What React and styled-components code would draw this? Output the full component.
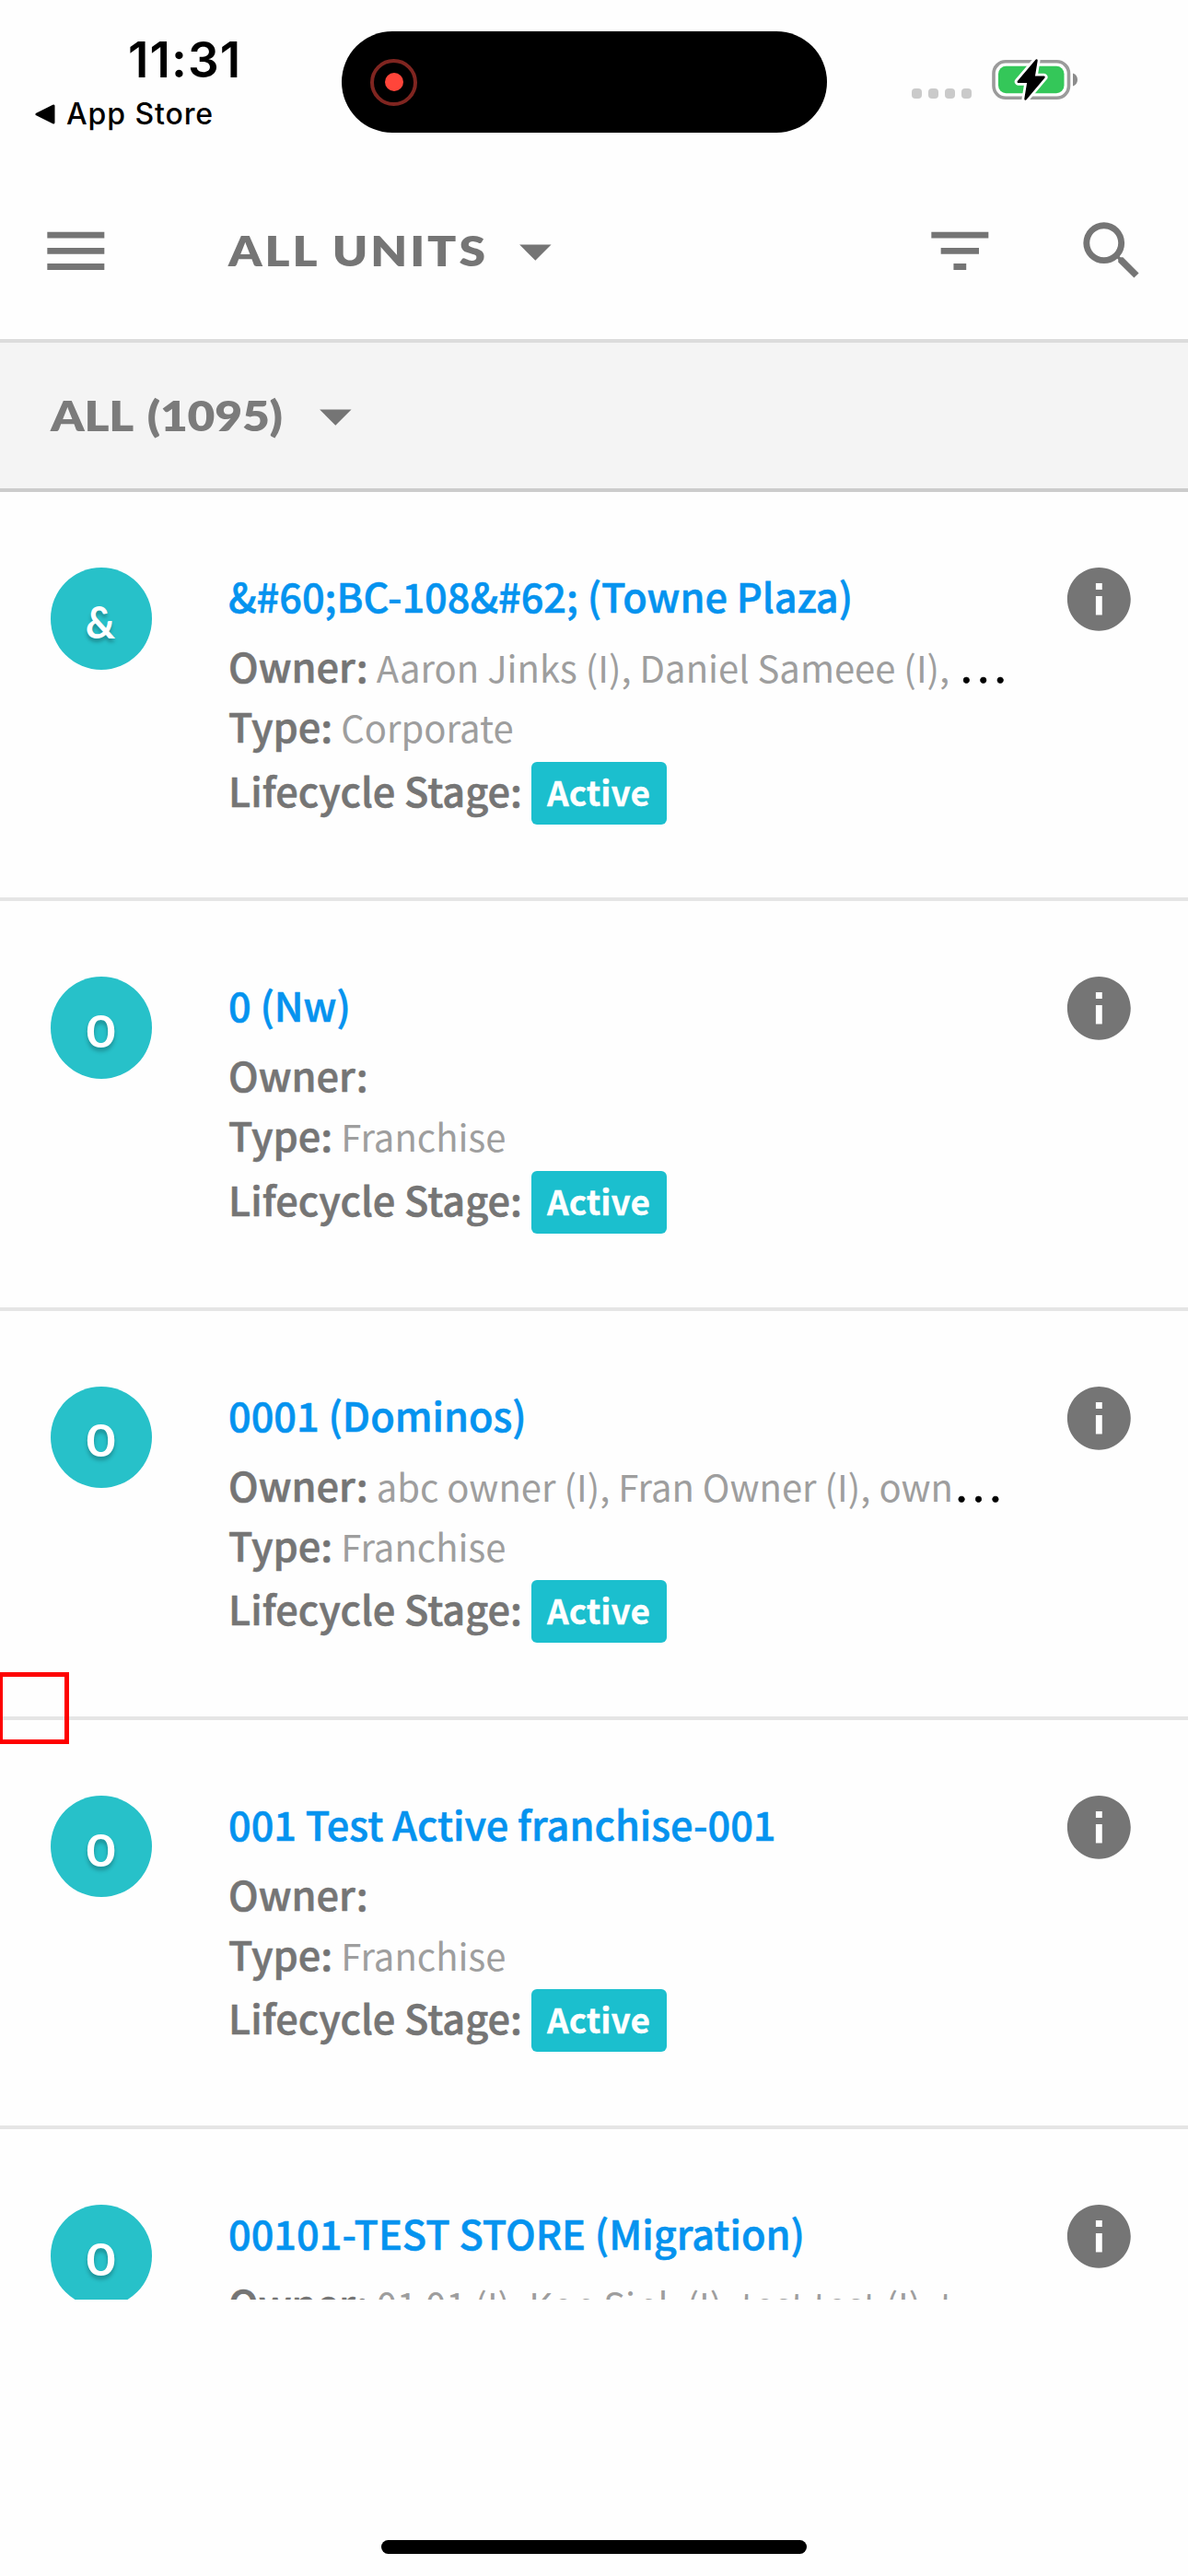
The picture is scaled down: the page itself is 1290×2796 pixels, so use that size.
import React from "react";
import styled, { createGlobalStyle } from "styled-components";

const GlobalStyle = createGlobalStyle`
  body { margin: 0; background: #fefefe; }
  * { box-sizing: border-box; }
`;

const sourceSans = `"Noto Sans CJK SC", "Noto Sans", sans-serif`;
const system = `Inter, "Liberation Sans", sans-serif`;
const heading = `Lato, "Open Sans", sans-serif`;

const Screen = styled.div`
  position: relative;
  display: flex;
  flex-direction: column;
  width: 1290px;
  height: 2796px;
  overflow: hidden;
  background: #fefefe;
  font-family: ${sourceSans};
`;

const StatusBar = styled.header`
  display: flex;
  align-items: flex-start;
  height: 176px;
  color: #000;
  font-family: ${system};
`;

const StatusLeft = styled.div`
  width: 371px;
  padding-top: 35px;
`;

const Clock = styled.div`
  padding-left: 139px;
  font-size: 53px;
  font-weight: 600;
  line-height: 60px;
  letter-spacing: 1.1px;
`;

const BackLink = styled.div`
  display: flex;
  align-items: center;
  gap: 12px;
  margin-top: 9px;
  padding-left: 38px;
  font-size: 32px;
  font-weight: 500;
  line-height: 40px;
  letter-spacing: 0.9px;
`;

const Island = styled.div`
  display: flex;
  align-items: center;
  width: 527px;
  height: 110px;
  margin-top: 34px;
  padding-left: 31px;
  border-radius: 55px;
  background: #000;
`;

const RecordRing = styled.div`
  display: flex;
  align-items: center;
  justify-content: center;
  width: 51px;
  height: 51px;
  border: 4px solid #7f2520;
  border-radius: 50%;
`;

const RecordDot = styled.div`
  width: 20px;
  height: 20px;
  border-radius: 50%;
  background: #ff453a;
`;

const SignalDots = styled.div`
  display: flex;
  gap: 7px;
  margin: 96px 0 0 92px;
`;

const SignalDot = styled.span`
  width: 11px;
  height: 11px;
  border-radius: 4px;
  background: #cacaca;
`;

const BatteryIcon = styled.svg`
  margin: 60px 0 0 21px;
`;

const Toolbar = styled.nav`
  display: flex;
  align-items: center;
  height: 196px;
  padding: 0 41px;
  border-bottom: 4px solid #dcdcdc;
  color: #757575;
`;

const Icon = styled.svg`
  flex: none;
  width: 82.67px;
  height: 82.67px;
  fill: #757575;
`;

const Title = styled.h1`
  width: ${(p) => p.$width}px;
  margin: 0;
  font-family: ${heading};
  font-size: 46px;
  font-weight: 800;
  line-height: 60px;
  white-space: nowrap;
  letter-spacing: ${(p) => p.$tracking}px;
  word-spacing: ${(p) => p.$wordGap || 0}px;
  color: ${(p) => p.$color};

  span {
    display: inline-block;
    transform: scaleX(1.12);
    transform-origin: left;
  }
`;

const PickerButton = styled.div`
  display: flex;
  align-items: center;
  margin-left: ${(p) => p.$offset}px;
`;

const Actions = styled.div`
  display: flex;
  gap: 83px;
  margin-left: auto;
`;

const FilterBar = styled.div`
  display: flex;
  align-items: center;
  height: 162px;
  padding-left: 55px;
  border-bottom: 4px solid #cccccc;
  background: #f4f4f4;
`;

const UnitList = styled.main`
  height: 1962px;
  overflow: hidden;
`;

const UnitRow = styled.article`
  display: grid;
  grid-template-columns: 110px 1fr 82.67px;
  column-gap: 83px;
  height: 444.3px;
  padding: 82px 55px 0 55px;
  border-bottom: 4px solid #e5e5e5;
`;

const Avatar = styled.div`
  display: flex;
  align-items: center;
  justify-content: center;
  width: 110px;
  height: 110.5px;
  padding: 7px 1px 0 0;
  border-radius: 50%;
  background: #27c1c9;
  color: #fff;
  font-family: ${heading};
  font-size: 47px;
  font-weight: 700;
  text-shadow: 0 4px 4px rgba(0, 0, 0, 0.25);

  span {
    transform: scaleX(${(p) => p.$stretch});
  }
`;

const Details = styled.div`
  min-width: 0;
  white-space: nowrap;
  color: #757575;
  font-size: 43.3px;
  font-weight: 500;
  -webkit-text-stroke: 0.6px currentColor;
`;

const UnitName = styled.h2`
  margin: 0 0 13px;
  color: #0593ef;
  font-size: 43.3px;
  font-weight: 500;
  line-height: 60px;
`;

const Field = styled.div`
  display: flex;
  align-items: baseline;
  height: ${(p) => p.$height || 66}px;
  line-height: ${(p) => p.$height || 66}px;
`;

const Value = styled.span`
  margin-left: 9px;
  color: #9e9e9e;
  font-size: 40px;
  font-weight: 400;
  white-space: pre;
  -webkit-text-stroke: 0;
`;

const More = styled.span`
  color: #000;
  font-family: "Liberation Serif", serif;
  font-size: 55px;
  font-weight: 400;
  line-height: 0;
`;

const StageField = styled.div`
  display: flex;
  align-items: center;
  gap: 10px;
  height: 72px;
  line-height: 72px;
`;

const Badge = styled.span`
  height: 68px;
  margin-top: 8px;
  padding: 0 18px 0 17px;
  border-radius: 6px;
  background: #1bbfce;
  color: #fff;
  font-size: 37px;
  font-weight: 700;
  line-height: 65px;
  -webkit-text-stroke: 0.3px currentColor;
`;

const InfoIcon = styled(Icon)`
  margin-top: -7px;
`;

const FocusBox = styled.div`
  position: absolute;
  top: 1815px;
  left: -2px;
  width: 77px;
  height: 78px;
  border: 5px solid #fe0000;
`;

const HomeIndicator = styled.div`
  width: 462px;
  height: 15px;
  margin: 261px auto 0;
  border-radius: 8px;
  background: #000;
`;

const units = [
  { name: "&#60;BC-108&#62; (Towne Plaza)", owner: "Aaron Jinks (I), Daniel Sameee (I), ", type: "Corporate" },
  { name: "0 (Nw)", owner: "", type: "Franchise" },
  { name: "0001 (Dominos)", owner: "abc owner (I), Fran Owner (I), own", type: "Franchise" },
  { name: "001 Test Active franchise-001", owner: "", type: "Franchise" },
  { name: "00101-TEST STORE (Migration)", owner: "01 01 (I), Ken Sink (I), test test (I), t", type: "Franchise" },
];

const Caret = () => (
  <Icon viewBox="0 0 24 24">
    <path d="M7 10l5 5 5-5z" />
  </Icon>
);

const Battery = () => (
  <BatteryIcon width="96" height="53" viewBox="1076 60 96 53">
    <rect x="1079" y="66.8" width="81.5" height="39.5" rx="13" fill="#fff" stroke="#9b9b9b" strokeWidth="3.6" />
    <rect x="1084" y="71.8" width="71.5" height="29.4" rx="8.5" fill="#34c759" />
    <path d="M1165 79.5c3 1 5 3.6 5 7s-2 6-5 7z" fill="#8c8c8c" />
    <path
      d="M1125.5 65.500L1105.8 88.7h10.8L1113.5 107.5L1133.500 83.700h-11z"
      fill="#fff"
      stroke="#fff"
      strokeWidth="8"
      strokeLinejoin="round"
    />
    <path
      d="M1125.5 65.500L1105.8 88.7h10.8L1113.5 107.5L1133.500 83.700h-11z"
      fill="#000"
      stroke="#000"
      strokeWidth="2.5"
      strokeLinejoin="round"
    />
  </BatteryIcon>
);

function Unit({ unit }) {
  const initial = unit.name[0];
  return (
    <UnitRow>
      <Avatar $stretch={initial === "0" ? 1.18 : 0.95}>
        <span>{initial}</span>
      </Avatar>
      <Details>
        <UnitName>{unit.name}</UnitName>
        <Field>
          Owner:
          {unit.owner && (
            <>
              <Value>{unit.owner}</Value>
              <More>…</More>
            </>
          )}
        </Field>
        <Field $height={65.5}>
          Type:<Value>{unit.type}</Value>
        </Field>
        <StageField>
          Lifecycle Stage:<Badge>Active</Badge>
        </StageField>
      </Details>
      <InfoIcon viewBox="0 0 24 24">
        <path d="M12 2C6.48 2 2 6.48 2 12s4.48 10 10 10 10-4.48 10-10S17.52 2 12 2zm1 15h-2v-6h2v6zm0-8h-2V7h2v2z" />
      </InfoIcon>
    </UnitRow>
  );
}

export default function App() {
  return (
    <Screen>
      <GlobalStyle />
      <StatusBar>
        <StatusLeft>
          <Clock>11:31</Clock>
          <BackLink>
            <svg width="22" height="22" viewBox="0 0 22 22">
              <path d="M2 11L20 2V20z" stroke="#000" strokeWidth="3" strokeLinejoin="round" />
            </svg>
            App Store
          </BackLink>
        </StatusLeft>
        <Island>
          <RecordRing>
            <RecordDot />
          </RecordRing>
        </Island>
        <SignalDots>
          {[0, 1, 2, 3].map((i) => (
            <SignalDot key={i} />
          ))}
        </SignalDots>
        <Battery />
      </StatusBar>

      <Toolbar>
        <Icon viewBox="0 0 24 24">
          <path d="M3 18h18v-2H3v2zm0-5h18v-2H3v2zm0-7v2h18V6H3z" />
        </Icon>
        <PickerButton $offset={124}>
          <Title $width={292} $tracking={2.6} $color="#757575">
            <span>ALL UNITS</span>
          </Title>
          <Caret />
        </PickerButton>
        <Actions>
          <Icon viewBox="0 0 24 24">
            <path d="M10 18h4v-2h-4v2zM3 6v2h18V6H3zm3 7h12v-2H6v2z" />
          </Icon>
          <Icon viewBox="0 0 24 24">
            <path d="M15.5 14h-.79l-.28-.27A6.471 6.471 0 0 0 16 9.5 6.5 6.5 0 1 0 9.5 16c1.61 0 3.09-.59 4.23-1.57l.27.28v.79l5 4.99L20.49 19l-4.99-5zm-6 0C7.01 14 5 11.99 5 9.5S7.01 5 9.5 5 14 7.01 14 9.5 11.99 14 9.5 14z" />
          </Icon>
        </Actions>
      </Toolbar>

      <FilterBar>
        <Title as="h2" $width={268} $tracking={-0.2} $wordGap={4} $color="#7b7b7b">
          <span>ALL (1095)</span>
        </Title>
        <Caret />
      </FilterBar>

      <UnitList>
        {units.map((u) => (
          <Unit key={u.name} unit={u} />
        ))}
      </UnitList>

      <HomeIndicator />
      <FocusBox />
    </Screen>
  );
}
